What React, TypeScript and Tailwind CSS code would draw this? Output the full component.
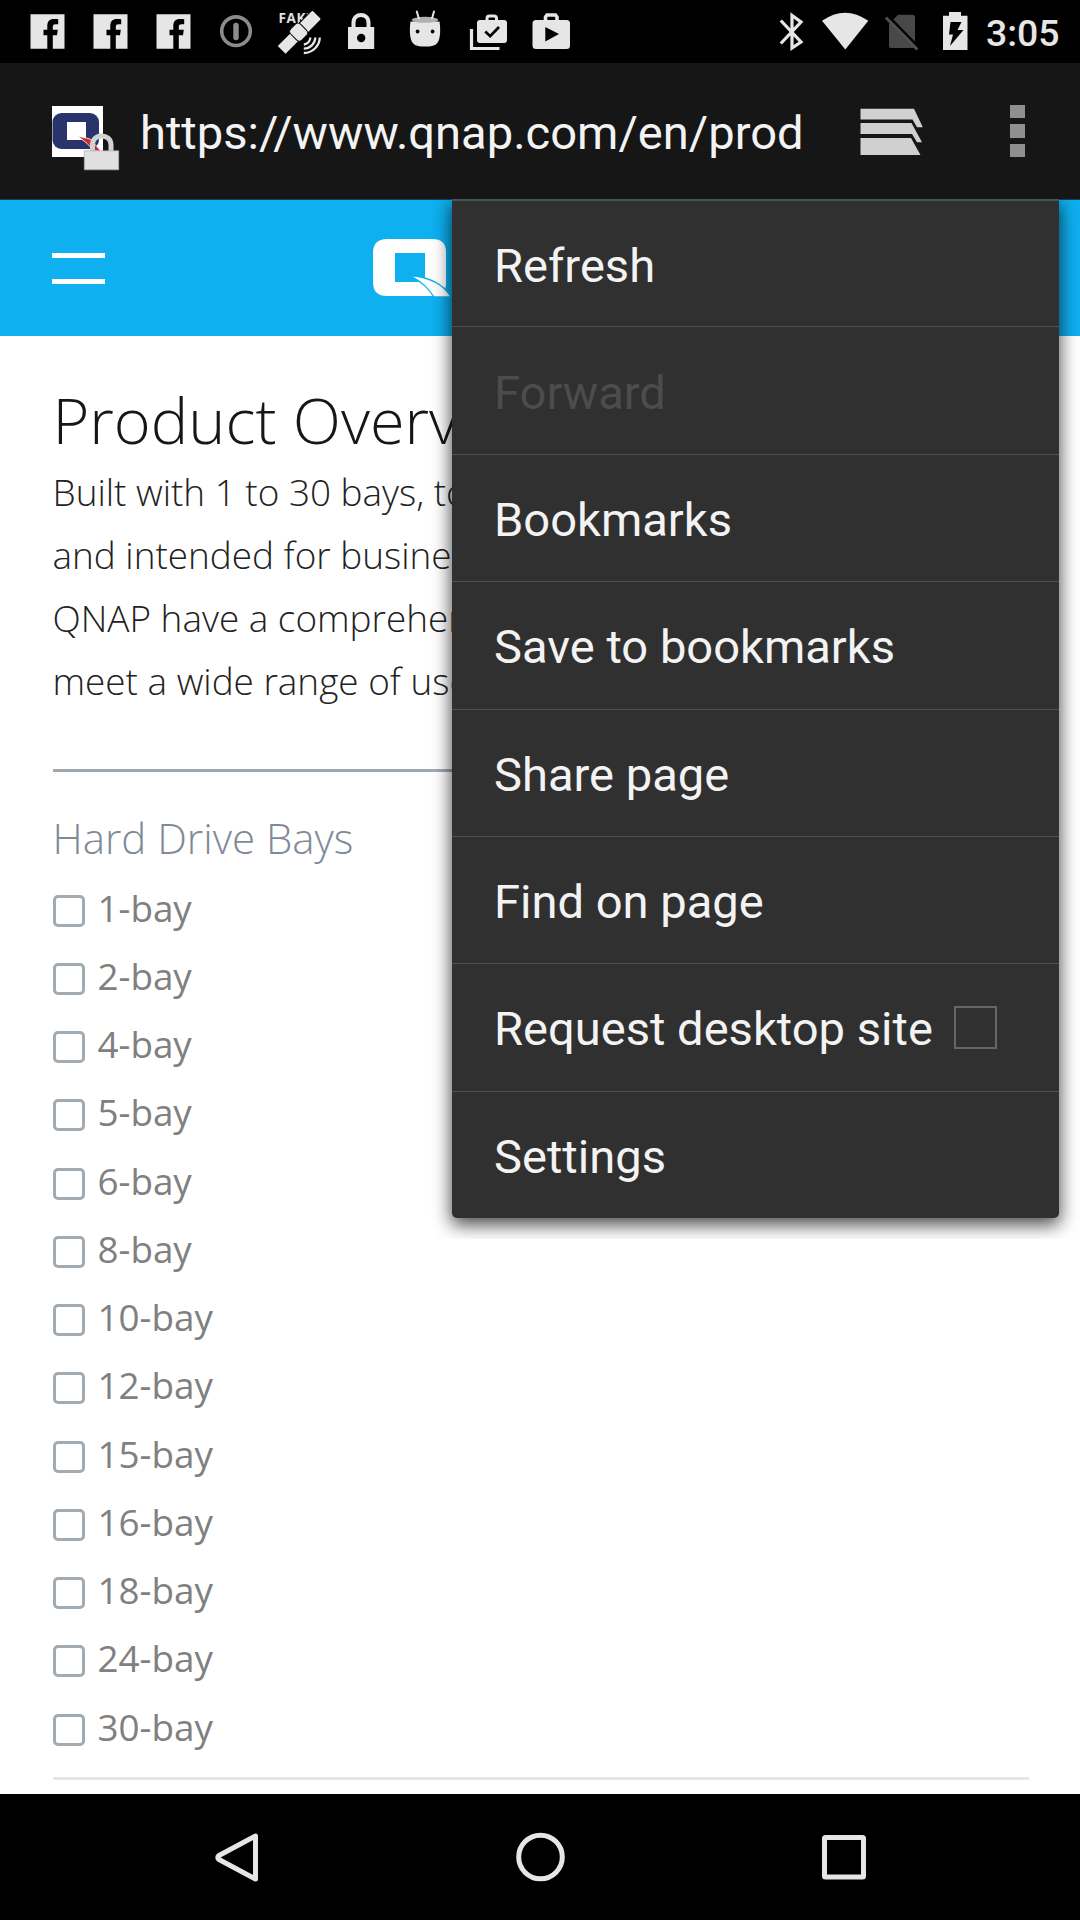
import React from 'react';

const bays = ['1', '2', '4', '5', '6', '8', '10', '12', '15', '16', '18', '24', '30'];

const menuItems = [
  { label: 'Refresh' },
  { label: 'Forward', disabled: true },
  { label: 'Bookmarks' },
  { label: 'Save to bookmarks' },
  { label: 'Share page' },
  { label: 'Find on page' },
  { label: 'Request desktop site', checkbox: true },
  { label: 'Settings' },
];

function FacebookIcon() {
  return (
    <svg className="h-[63px] w-[63px]" viewBox="16 0 63 63">
      <path fill="#e6e6e6" d="M30.5 14.2H64.500V48.700H52.800V35.200H57L57.800 29.800H52.800V27C52.800 25 53.600 24.300 55.500 24.300H58.200V19.300C57 19.100 55.500 19 54 19C49.500 19 47.300 21.500 47.300 26V29.800H43.500V35.200H47.300V48.700H30.500Z" />
    </svg>
  );
}

function InfoIcon() {
  return (
    <svg className="h-[63px] w-[63px]" viewBox="205 0 63 63">
      <circle cx="236" cy="31.200" r="14.300" fill="none" stroke="#8c8c8c" strokeWidth="3.600" />
      <path d="M236 25.500V37.500" stroke="#8c8c8c" strokeWidth="5.500" strokeLinecap="round" />
    </svg>
  );
}

function SatelliteIcon() {
  return (
    <svg className="h-[63px] w-[63px]" viewBox="268 0 63 63">
      <text x="278.500" y="22.800" fontFamily="Open Sans, sans-serif" fontWeight="700" fontSize="13.500" letterSpacing="0.6" fill="#e0e0e0">FAKE</text>
      <g transform="translate(299 32.500) rotate(-45)">
        <rect x="-25" y="-6" width="19" height="12" fill="#e6e6e6" stroke="#000" />
        <rect x="5" y="-6.500" width="20.500" height="13" rx="1.500" fill="#e6e6e6" stroke="#000" />
        <rect x="-7" y="-8.500" width="14" height="16" rx="4" fill="#e6e6e6" stroke="#000" />
      </g>
      <g fill="none" stroke="#e6e6e6" strokeWidth="2.300">
        <path d="M303.800 44.500A7 7 0 0 0 310.300 37.500" />
        <path d="M303.800 48.700A11.500 11.500 0 0 0 315.300 37.500" />
        <path d="M303.800 53A16 16 0 0 0 319.800 37.500" />
      </g>
    </svg>
  );
}

function StatusLockIcon() {
  return (
    <svg className="h-[63px] w-[63px]" viewBox="331 0 63 63">
      <path d="M353.500 28V23C353.500 17.500 357 15 361 15S368.500 17.500 368.500 23V28" fill="none" stroke="#e6e6e6" strokeWidth="4" />
      <path d="M348 27H374.200V49H348Z" fill="#e6e6e6" />
      <circle cx="361.200" cy="38" r="4.200" fill="#000" />
    </svg>
  );
}

function MarshmallowIcon() {
  return (
    <svg className="h-[63px] w-[63px]" viewBox="394 0 63 63">
      <path d="M410.500 21.500C409.500 28 409.500 36 411.500 41C414 46.500 420 46.500 425 46.500S436 46.500 438.500 41C440.500 36 440.500 28 439.500 21.500Z" fill="#e6e6e6" />
      <ellipse cx="425" cy="19.800" rx="13.200" ry="3" fill="#b0b0b0" />
      <path d="M416.800 11.500L418.800 18.500M434 11.500L432 18.500" stroke="#e6e6e6" strokeWidth="2" strokeLinecap="round" />
      <circle cx="417.600" cy="31.500" r="1.900" fill="#000" />
      <circle cx="432.600" cy="31.500" r="1.900" fill="#000" />
    </svg>
  );
}

function CheckedBagIcon() {
  return (
    <svg className="h-[63px] w-[63px]" viewBox="457 0 63 63">
      <path d="M487 21V18.500Q487 16 489.500 16H494Q496.500 16 496.500 18.500V21" fill="none" stroke="#e6e6e6" strokeWidth="3" />
      <rect x="477" y="20" width="30" height="23" rx="3" fill="#e6e6e6" />
      <path d="M485.300 31.500L490.200 36.200L499 27" fill="none" stroke="#000" strokeWidth="2.700" />
      <path d="M471.500 29V48.500H499.500" fill="none" stroke="#e6e6e6" strokeWidth="3.200" />
    </svg>
  );
}

function PlayBagIcon() {
  return (
    <svg className="h-[63px] w-[63px]" viewBox="520 0 63 63">
      <path d="M545.500 21V17L547 15H555.500L557 17V21" fill="none" stroke="#e6e6e6" strokeWidth="3.600" />
      <rect x="532.500" y="20" width="37.500" height="29" rx="3.500" fill="#e6e6e6" />
      <path d="M545.300 27V41.500L559 34Z" fill="#000" />
    </svg>
  );
}

function SystemIcons() {
  return (
    <svg className="h-[63px] w-[200px]" viewBox="776 0 200 63">
      <path d="M780.800 20.500L801 42L792 48V15.500L801 22L780.800 43.500" fill="none" stroke="#e6e6e6" strokeWidth="3.200" />
      <path d="M822 20.800Q845 4.500 868.300 20.800L845.300 49.500Z" fill="#e6e6e6" />
      <path d="M898 14.800H912.500Q915 14.800 915 17.300V46Q915 48 913 48H891Q889 48 889 46V24Z" fill="#484848" />
      <path d="M889.500 17.500L915.500 44" stroke="#000" strokeWidth="2.500" />
      <path d="M885.800 17.500L917.300 49.500" stroke="#505050" strokeWidth="3" />
      <path d="M943 15.800H949V12H961V15.800H967.500V50H943Z" fill="#e6e6e6" />
      <path d="M950.500 22H961.500L957.500 30H963.500L950 46L953 34.500H949Z" fill="#000" />
    </svg>
  );
}

function SiteIcon() {
  return (
    <svg className="h-[66px] w-[70px]" viewBox="52 105 70 66">
      <path d="M52 106H103V157H52Z" fill="#fff" />
      <rect x="52.500" y="113" width="46.500" height="36" rx="9" fill="#28346b" />
      <path d="M67 122H86V140H67Z" fill="#fff" />
      <path d="M77.500 136L90 139L101 151H94Q88 143 77.500 136Z" fill="#d7262d" stroke="#fff" strokeWidth=".8" />
      <path d="M92.500 153V145C92.500 139 96.500 136 101.500 136S111 139 111 145V153" fill="none" stroke="#d2d2d2" strokeWidth="5" />
      <path d="M84.300 150.800H118.700V169.800H84.300Z" fill="#e0e0e0" stroke="#aaa" strokeWidth=".7" />
    </svg>
  );
}

function TabsIcon() {
  return (
    <svg className="h-[50px] w-[66px]" viewBox="859 107 66 50">
      <path fill="#d0d0d0" d="M860.500 108.800H914L922.800 127.200H917L912.500 119.500H860.500ZM860.500 123H911.500L922 142.200H917L912 134H860.500ZM860.500 138H911L920.500 155H860.500Z" />
    </svg>
  );
}

function QLogo() {
  return (
    <svg className="h-[60px] w-[80px]" viewBox="372 238 80 60">
      <path fill="#fff" fillRule="evenodd" d="M387 239H432Q446 239 446 252V283Q446 296 433 296H387Q373 296 373 282V253Q373 239 387 239ZM395 253V282H425V253Z" />
      <path fill="#fff" stroke="#0eb0f0" strokeWidth="1.300" d="M410 275.500Q440 278 451 297H434Q426 284 410 275.500Z" />
    </svg>
  );
}

export default function App() {
  return (
    <div className="relative flex h-[1920px] w-[1080px] flex-col overflow-hidden bg-white font-['Roboto',sans-serif]">
      <header className="flex h-[63px] shrink-0 items-center bg-black pl-4">
        <FacebookIcon />
        <FacebookIcon />
        <FacebookIcon />
        <InfoIcon />
        <SatelliteIcon />
        <StatusLockIcon />
        <MarshmallowIcon />
        <CheckedBagIcon />
        <PlayBagIcon />
        <div className="ml-[193px] flex items-center">
          <SystemIcons />
          <span className="ml-[10px] pt-[3px] text-[37.400px] leading-[60px] font-medium text-[#e6e6e6]">3:05</span>
        </div>
      </header>

      <div className="flex h-[137px] shrink-0 items-center border-b border-[#1c414f] bg-[#161616] pl-[52px]">
        <div className="mt-[14px]"><SiteIcon /></div>
        <span className="ml-[18px] w-[676px] overflow-hidden pt-[4px] text-[47.100px] leading-[60px] whitespace-nowrap text-[#f3f3f3]">https://www.qnap.com/en/prod</span>
        <div className="mt-[2px] ml-[43px]"><TabsIcon /></div>
        <div className="ml-[85px] flex flex-col gap-[6px]">
          <i className="h-[13.500px] w-[14.500px] bg-[#8f8f8f]" />
          <i className="h-[13.500px] w-[14.500px] bg-[#8f8f8f]" />
          <i className="h-[13.500px] w-[14.500px] bg-[#8f8f8f]" />
        </div>
      </div>

      <div className="flex h-[136px] shrink-0 items-center bg-[#0eb0f0] pl-[52px]">
        <div className="flex w-[53px] flex-col gap-[21px]">
          <i className="h-[5px] bg-white" />
          <i className="h-[5px] bg-white" />
        </div>
        <div className="ml-[267px]"><QLogo /></div>
      </div>

      <main className="flex-1 pt-[40px] pr-[51px] pl-[52.500px] font-['Open_Sans',sans-serif]">
        <h1 className="text-[63px] leading-[88px] font-light whitespace-nowrap text-[#161616]">Product Overview</h1>
        <p className="mt-[-3px] text-[36.900px] leading-[63px] font-light whitespace-nowrap text-[#222]">
          Built with 1 to 30 bays, tower<br />
          and intended for business<br />
          QNAP have a comprehensive<br />
          meet a wide range of users
        </p>
        <hr className="mt-[56px] border-0 border-t-[3px] border-[#a0a8af]" />
        <h2 className="mt-[36px] text-[42px] leading-[60px] font-light text-[#7f8a97]">Hard Drive Bays</h2>
        <ul className="mt-[7.500px]">
          {bays.map((bay) => (
            <li key={bay} className="flex h-[68.250px] items-center">
              <i className="mt-[2px] h-[32px] w-[32px] rounded-[5px] border-[3px] border-[#a3abb2]" />
              <span className="mt-[-4px] ml-[13px] text-[36.800px] leading-[60px] text-[#808080]">{bay}-bay</span>
            </li>
          ))}
        </ul>
        <hr className="mt-[14px] border-0 border-t-[3px] border-[#e6e6e6]" />
      </main>

      <nav className="flex h-[126px] shrink-0 items-center justify-between bg-black pr-[211px] pl-[212px]">
        <svg className="h-[54px] w-[50px]" viewBox="212 1830 50 54">
          <path d="M255.500 1836V1879L219 1859.500Q216.500 1857.500 219 1855.500Z" fill="none" stroke="#e6e6e6" strokeWidth="5" strokeLinejoin="round" />
        </svg>
        <svg className="h-[54px] w-[54px]" viewBox="513.500 1830 54 54">
          <circle cx="540" cy="1857" r="21.800" fill="none" stroke="#e6e6e6" strokeWidth="5" />
        </svg>
        <svg className="h-[54px] w-[50px]" viewBox="819 1830 50 54">
          <rect x="824.500" y="1837.500" width="39" height="39.500" rx="1" fill="none" stroke="#e6e6e6" strokeWidth="5" />
        </svg>
      </nav>

      <div className="absolute top-[199px] left-[452px] flex h-[1019px] w-[607px] flex-col rounded-b-[5px] bg-[#303030] shadow-[0_6px_18px_1px_rgba(0,0,0,0.7)] [clip-path:inset(0_-21px_-21px_-21px)]">
        {menuItems.map((item, index) => (
          <div
            key={item.label}
            className={
              'flex h-[127.375px] shrink-0 items-center pt-[4px] pl-[42px] text-[47.100px] leading-[60px] whitespace-nowrap ' +
              (item.disabled ? 'text-[#4c4c4c] ' : 'text-[#f3f3f3] ') +
              (index > 0 ? 'border-t border-[#505050]' : 'border-t-2 border-[#45535a]')
            }
          >
            {item.label}
            {item.checkbox && <i className="mt-[-4px] ml-[21px] h-[43px] w-[43px] border-2 border-[#666]" />}
          </div>
        ))}
      </div>
    </div>
  );
}
